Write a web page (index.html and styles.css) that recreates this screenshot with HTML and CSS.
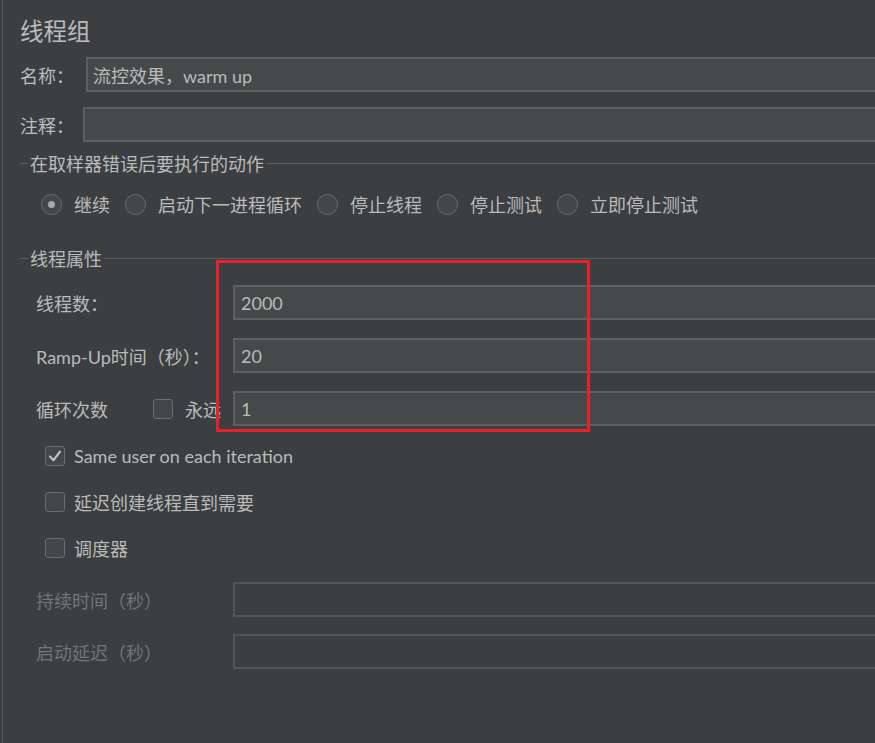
FILE: index.html
```html
<!DOCTYPE html>
<html lang="zh-CN">
<head>
<meta charset="utf-8">
<title>线程组</title>
<link rel="stylesheet" href="styles.css">
</head>
<body>
<div class="page">
  <div class="title">线程组</div>

  <div class="row row-name">
    <span class="label label-name">名称：</span>
    <div class="field"><span class="field-text">流控效果，warm up</span></div>
  </div>
  <div class="row row-comment">
    <span class="label label-comment">注释：</span>
    <div class="field"></div>
  </div>

  <div class="group-head group-head-1"><span class="group-title">在取样器错误后要执行的动作</span></div>
  <div class="radios">
    <div class="radio-item"><span class="radio selected"></span><span class="radio-text">继续</span></div>
    <div class="radio-item"><span class="radio"></span><span class="radio-text">启动下一进程循环</span></div>
    <div class="radio-item"><span class="radio"></span><span class="radio-text">停止线程</span></div>
    <div class="radio-item"><span class="radio"></span><span class="radio-text">停止测试</span></div>
    <div class="radio-item"><span class="radio"></span><span class="radio-text">立即停止测试</span></div>
  </div>

  <div class="group-head group-head-2"><span class="group-title">线程属性</span></div>
  <div class="props">
    <div class="row prop-row prop-first">
      <span class="label prop-label">线程数：</span>
      <div class="field"><span class="field-text num">2000</span></div>
    </div>
    <div class="row prop-row">
      <span class="label prop-label">Ramp-Up时间（秒）：</span>
      <div class="field"><span class="field-text num">20</span></div>
    </div>
    <div class="row prop-row">
      <span class="prop-label loop-label"><span class="loop-text">循环次数</span><span class="checkbox"></span><span class="forever">永远</span></span>
      <div class="field"><span class="field-text num">1</span></div>
    </div>

    <div class="check-row check-first">
      <span class="checkbox checked"><svg viewBox="0 0 20 20" width="20" height="20"><path d="M5 10.5 L8.6 14.2 L15 5.6" fill="none" stroke="#c2c2c2" stroke-width="2.2" stroke-linecap="round" stroke-linejoin="round"/></svg></span>
      <span class="check-text">Same user on each iteration</span>
    </div>
    <div class="check-row">
      <span class="checkbox"></span>
      <span class="check-text">延迟创建线程直到需要</span>
    </div>
    <div class="check-row">
      <span class="checkbox"></span>
      <span class="check-text">调度器</span>
    </div>

    <div class="row prop-row disabled disabled-first">
      <span class="label prop-label">持续时间（秒）</span>
      <div class="field"></div>
    </div>
    <div class="row prop-row disabled">
      <span class="label prop-label">启动延迟（秒）</span>
      <div class="field"></div>
    </div>
  </div>
</div>
<div class="highlight"></div>
</body>
</html>
```

FILE: styles.css
```css
html, body {
  margin: 0;
  padding: 0;
  background: #3c3f41;
  overflow: hidden;
}
body {
  width: 875px;
  height: 743px;
  position: relative;
  font-family: "Lato", "Noto Sans CJK SC", sans-serif;
  font-size: 18px;
  color: #bbbbbb;
}
.page {
  margin-left: 2px;
  border-left: 1px solid #555759;
  padding-left: 17px;
  width: 960px;
  height: 743px;
  box-sizing: border-box;
  display: flex;
  flex-direction: column;
}
.title {
  margin-top: 15px;
  height: 30px;
  line-height: 30px;
  font-size: 23.5px;
  font-family: "Noto Sans CJK SC", sans-serif;
}
.row {
  display: flex;
  align-items: center;
  height: 35px;
}
.row-name { margin-top: 12px; }
.row-comment { margin-top: 15px; }
.label {
  flex: none;
  white-space: nowrap;
}
.label-name { width: 66px; }
.label-comment { width: 63px; }
.field {
  flex: 1;
  height: 35px;
  box-sizing: border-box;
  background: #45494a;
  border: 2px solid #5d6061;
  display: flex;
  align-items: center;
  padding-left: 5px;
}
.field-text { white-space: nowrap; }
.num { padding-left: 1px; }

.group-head {
  display: flex;
  align-items: center;
  height: 20px;
}
.group-head::before {
  content: "";
  width: 8px;
  height: 1px;
  background: #5a5d5f;
  margin-right: 2px;
}
.group-head::after {
  content: "";
  flex: 1;
  height: 1px;
  background: #5a5d5f;
  margin-left: 2px;
}
.group-head-1 { margin-top: 11px; }
.group-head-2 { margin-top: 32px; }
.group-title { white-space: nowrap; }

.radios {
  display: flex;
  align-items: center;
  margin-top: 19px;
  height: 24px;
  padding-left: 21px;
  gap: 15px;
}
.radio-item {
  display: flex;
  align-items: center;
  gap: 12px;
}
.radio {
  width: 21px;
  height: 21px;
  box-sizing: border-box;
  border: 1px solid #6b6e70;
  border-radius: 50%;
  background: #43474a;
  display: flex;
  align-items: center;
  justify-content: center;
}
.radio.selected::after {
  content: "";
  width: 7px;
  height: 7px;
  border-radius: 50%;
  background: #a9a9a9;
}
.radio-text { white-space: nowrap; }

.props {
  display: flex;
  flex-direction: column;
  padding-left: 16px;
}
.prop-row { margin-top: 18px; }
.prop-first { margin-top: 17px; }
.prop-label { width: 197px; }
.loop-label {
  display: flex;
  align-items: center;
  flex: none;
  overflow: hidden;
  white-space: nowrap;
}
.loop-text { width: 117px; flex: none; }
.loop-label .checkbox { margin-right: 12px; }
.forever { white-space: nowrap; }

.checkbox {
  flex: none;
  width: 20px;
  height: 20px;
  box-sizing: border-box;
  border: 1px solid #6b6e70;
  border-radius: 3px;
  background: #43474a;
  display: flex;
  align-items: center;
  justify-content: center;
  position: relative;
}
.checkbox svg {
  position: absolute;
  left: -1px;
  top: -1px;
}
.check-row {
  display: flex;
  align-items: center;
  height: 24px;
  margin-top: 22px;
  padding-left: 9px;
  gap: 9px;
}
.check-first { margin-top: 18px; }
.check-text { white-space: nowrap; }

.disabled .label { color: #727476; }
.disabled .field {
  background: #3c3f41;
  border-color: #535658;
}
.disabled-first { margin-top: 22px; }
.disabled + .disabled { margin-top: 17px; }

.highlight {
  position: absolute;
  left: 216px;
  top: 260px;
  width: 374px;
  height: 172px;
  box-sizing: border-box;
  border: 3px solid #e8202a;
}
```
